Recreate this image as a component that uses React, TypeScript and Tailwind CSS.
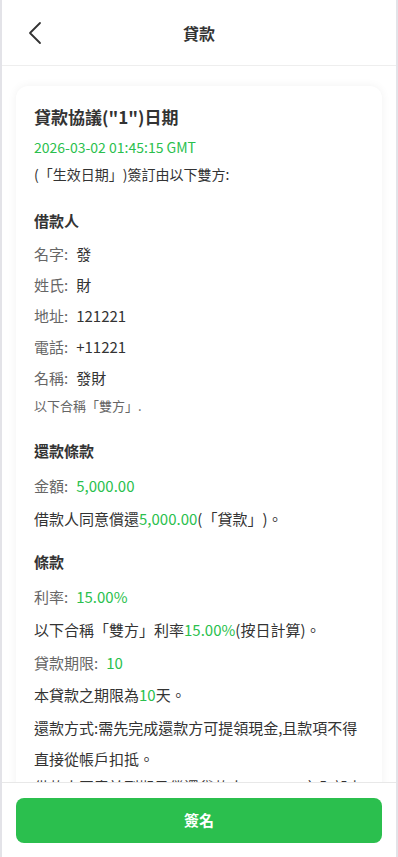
import React from 'react';

const font = { fontFamily: '"Noto Sans CJK TC", "Noto Sans", sans-serif' };

function Row({ label, value, green, className = '' }: { label: string; value: string; green?: boolean; className?: string }) {
  return (
    <div className={`text-[15px] leading-[31px] ${className}`}>
      <span className="text-[#666]">{label}:</span>
      <span className={`ml-[8px] ${green ? 'text-[#2bbf4e]' : 'text-[#333]'}`}>{value}</span>
    </div>
  );
}

export default function App() {
  return (
    <div style={font} className="h-[857px] w-[398px] flex flex-col bg-white border-l-2 border-r-2 border-[#e3e3e8] overflow-hidden [text-spacing-trim:space-all]">
      <header className="h-[66px] shrink-0 flex items-center relative border-b border-[#eeeeee]">
        <button className="absolute left-[24px] top-[21px] text-[#333]">
          <svg width="20" height="24" viewBox="0 0 20 24" fill="none" stroke="#333" strokeWidth="1.8" strokeLinecap="round" strokeLinejoin="round">
            <path d="M14 2 L4 12 L14 22" />
          </svg>
        </button>
        <h1 className="flex-1 text-center text-[16px] font-bold text-[#333]">貸款</h1>
      </header>

      <main className="flex-1 overflow-hidden px-[14px] pt-[20px]">
        <div className="rounded-[12px] bg-white shadow-[0_0_10px_rgba(0,0,0,0.06)] px-[18px] pt-[18px] pb-6">
          <h2 className="text-[17px] font-bold text-[#333] leading-[26px]">貸款協議("1")日期</h2>
          <p className="text-[14px] text-[#2bbf4e] mt-[6px] leading-[22px]">2026-03-02 01:45:15 GMT</p>
          <p className="text-[14px] text-[#333] mt-[5px] leading-[22px]">(「生效日期」)簽訂由以下雙方:</p>

          <h3 className="text-[15px] font-bold text-[#333] mt-[25px] leading-[22px]">借款人</h3>
          <div className="mt-[6px]">
            <Row label="名字" value="發" />
            <Row label="姓氏" value="財" />
            <Row label="地址" value="121221" />
            <Row label="電話" value="+11221" />
            <Row label="名稱" value="發財" />
          </div>
          <p className="text-[13px] text-[#666] leading-[24px] mt-[1px]">以下合稱「雙方」.</p>

          <h3 className="text-[15px] font-bold text-[#333] mt-[22px] leading-[22px]">還款條款</h3>
          <Row label="金額" value="5,000.00" green className="mt-[8px]" />
          <p className="text-[15px] text-[#333] leading-[31px] mt-[2px]">
            借款人同意償還<span className="text-[#2bbf4e]">5,000.00</span>(「貸款」)。
          </p>

          <h3 className="text-[15px] font-bold text-[#333] mt-[17px] leading-[22px]">條款</h3>
          <Row label="利率" value="15.00%" green className="mt-[8px]" />
          <p className="text-[15px] text-[#333] leading-[31px] mt-[2px]">
            以下合稱「雙方」利率<span className="text-[#2bbf4e]">15.00%</span>(按日計算)。
          </p>
          <Row label="貸款期限" value="10" green className="mt-[2px]" />
          <p className="text-[15px] text-[#333] leading-[31px] mt-[1px]">
            本貸款之期限為<span className="text-[#2bbf4e]">10</span>天。
          </p>
          <p className="text-[15px] text-[#333] leading-[31px] mt-[2px]">
            還款方式:需先完成還款方可提領現金,且款項不得直接從帳戶扣抵。
          </p>
          <p className="text-[15px] text-[#333] leading-[31px] mt-[-3px]">
            借款人同意於到期日償還貸款人<span className="text-[#2bbf4e]">5,000.00</span>之全部本金及利息。
          </p>
        </div>
      </main>

      <footer className="h-[75px] shrink-0 border-t border-[#e8e8e8] bg-white px-[14px] pt-[15px]">
        <button className="w-full h-[45px] rounded-[8px] bg-[#2bbf4e] text-white text-[15px] font-bold">簽名</button>
      </footer>
    </div>
  );
}
